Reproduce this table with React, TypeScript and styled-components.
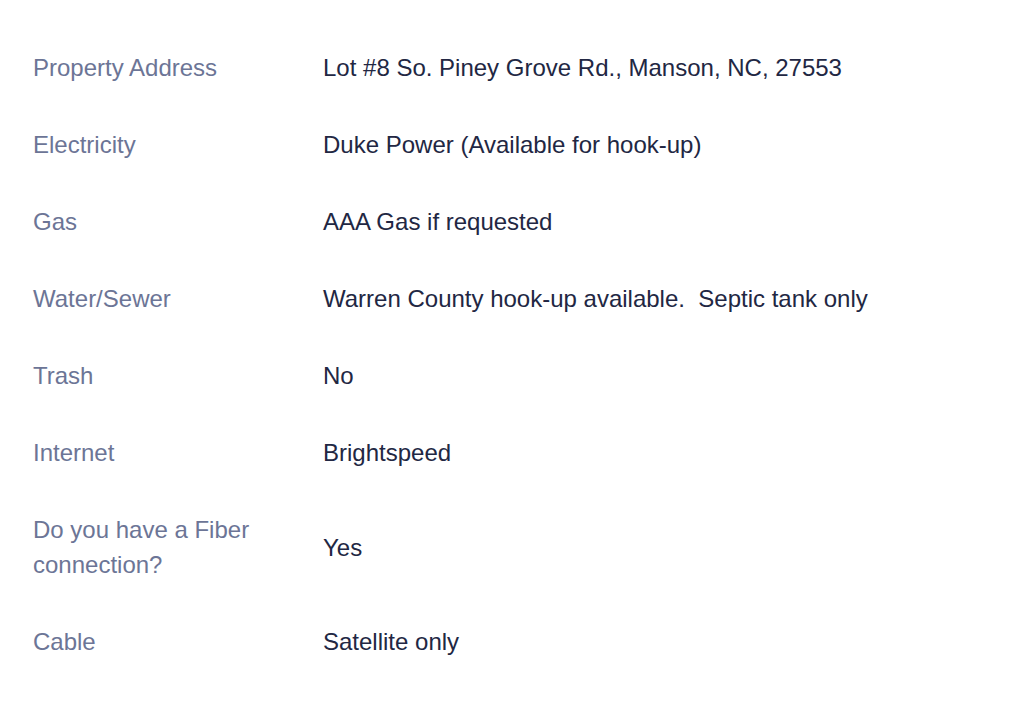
import * as React from "react";
import styled, { createGlobalStyle } from "styled-components";

const GlobalStyle = createGlobalStyle`
  html, body {
    margin: 0;
    padding: 0;
    background: #ffffff;
    font-family: "Liberation Sans", Arial, sans-serif;
  }
`;

const SPage = styled.div`
  width: 1024px;
  height: 724px;
  box-sizing: border-box;
  padding: 29px 33px 0 33px;
  background: #ffffff;
`;

const SList = styled.dl`
  margin: 0;
  display: grid;
  grid-template-columns: 290px 1fr;
  width: 920px;
`;

const SLabel = styled.dt`
  margin: 0;
  padding: 21px 30px 21px 0;
  display: flex;
  align-items: center;
  font-family: "Liberation Sans", Arial, sans-serif;
  font-size: 24px;
  line-height: 35px;
  color: #6c7596;
`;

const SValue = styled.dd`
  margin: 0;
  padding: 21px 0;
  display: flex;
  align-items: center;
  font-family: "Liberation Sans", Arial, sans-serif;
  font-size: 24px;
  line-height: 35px;
  color: #222743;
  white-space: pre;
`;

interface IDetailRow {
  label: string;
  value: string;
}

const rows: IDetailRow[] = [
  { label: "Property Address", value: "Lot #8 So. Piney Grove Rd., Manson, NC, 27553" },
  { label: "Electricity", value: "Duke Power (Available for hook-up)" },
  { label: "Gas", value: "AAA Gas if requested" },
  { label: "Water/Sewer", value: "Warren County hook-up available.  Septic tank only" },
  { label: "Trash", value: "No" },
  { label: "Internet", value: "Brightspeed" },
  { label: "Do you have a Fiber connection?", value: "Yes" },
  { label: "Cable", value: "Satellite only" },
];

const App = () => {
  return (
    <React.Fragment>
      <GlobalStyle />
      <SPage>
        <SList>
          {rows.map((row) => (
            <React.Fragment key={row.label}>
              <SLabel>{row.label}</SLabel>
              <SValue>{row.value}</SValue>
            </React.Fragment>
          ))}
        </SList>
      </SPage>
    </React.Fragment>
  );
};

export default App;
